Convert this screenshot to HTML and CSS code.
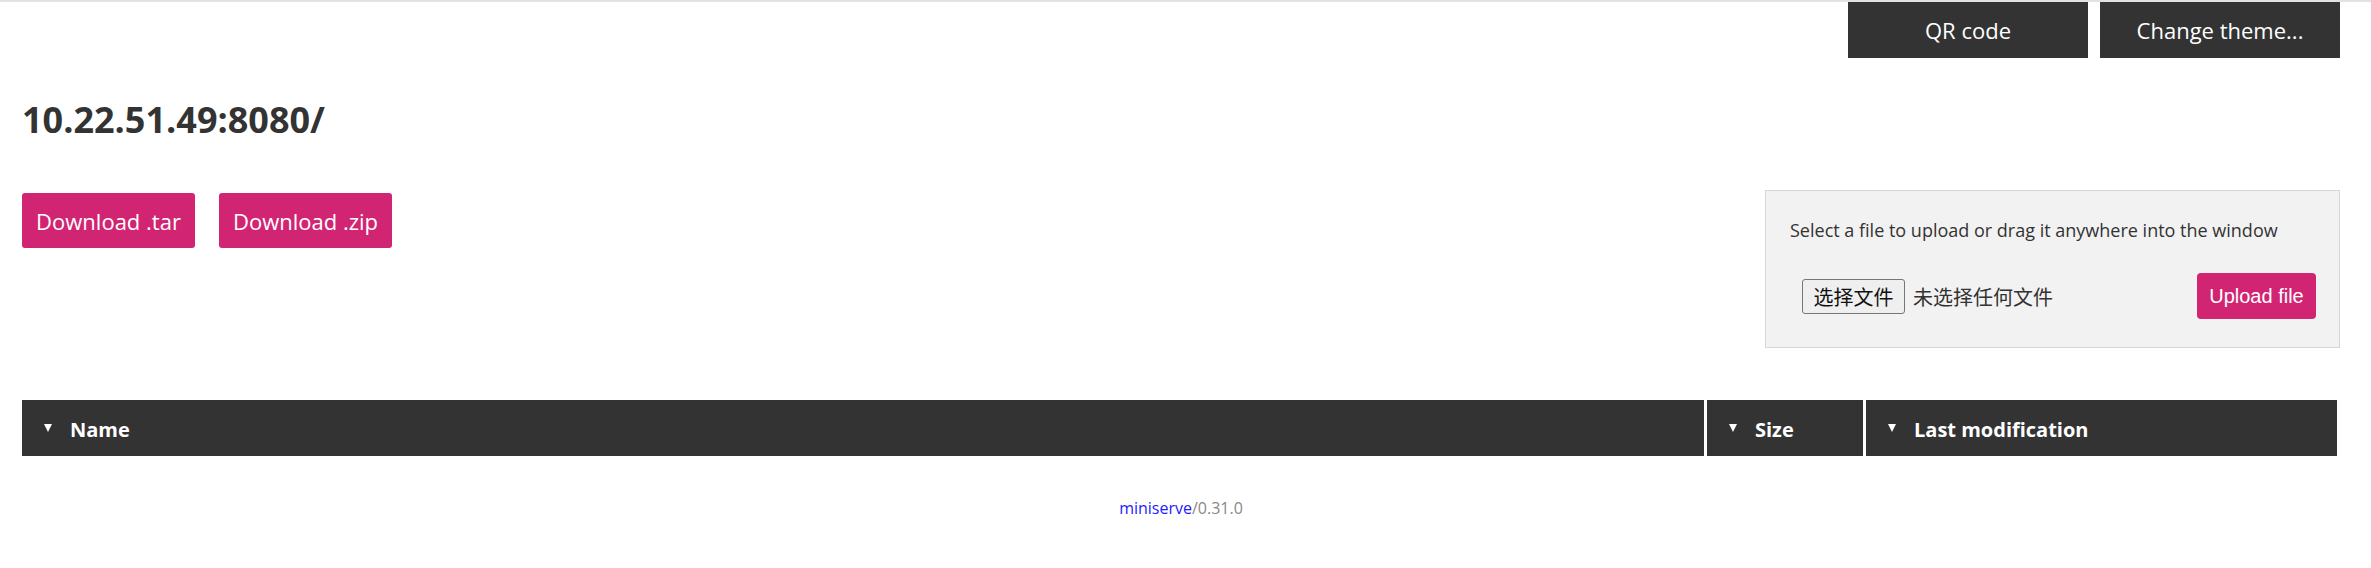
FILE: index.html
```html
<!DOCTYPE html>
<html lang="en">
<head>
<meta charset="utf-8">
<title>Index of /</title>
<link rel="stylesheet" href="styles.css">
</head>
<body>
<div class="page">
  <div class="toolbar">
    <button class="tool-btn">QR code</button>
    <button class="tool-btn">Change theme...</button>
  </div>
  <h1 class="title">10.22.51.49:8080/</h1>
  <div class="actions">
    <div class="downloads">
      <a class="dl-btn" href="#">Download .tar</a>
      <a class="dl-btn" href="#">Download .zip</a>
    </div>
    <div class="upload">
      <p class="upload-hint">Select a file to upload or drag it anywhere into the window</p>
      <div class="upload-row">
        <div class="file-input">
          <span class="file-btn">选择文件</span>
          <span class="file-none">未选择任何文件</span>
        </div>
        <button class="upload-btn">Upload file</button>
      </div>
    </div>
  </div>
  <div class="table-head">
    <div class="th"><span class="arrow"></span><span class="th-label">Name</span></div>
    <div class="th"><span class="arrow"></span><span class="th-label">Size</span></div>
    <div class="th"><span class="arrow"></span><span class="th-label">Last modification</span></div>
  </div>
  <footer class="footer"><a class="footer-link" href="#">miniserve</a><span class="footer-ver">/0.31.0</span></footer>
</div>
</body>
</html>
```
FILE: styles.css
```css
html, body {
  margin: 0;
  padding: 0;
  background: #ffffff;
}

body {
  border-top: 2px solid #e2e2e2;
  font-family: "Open Sans", "Noto Sans", sans-serif;
  color: #333333;
}

.page {
  padding: 0 31px 0 22px;
}

.toolbar {
  display: flex;
  justify-content: flex-end;
  gap: 12px;
}

.tool-btn {
  width: 240px;
  height: 56px;
  border: none;
  background: #333333;
  color: #ffffff;
  font-family: "Open Sans", sans-serif;
  font-size: 22px;
  padding: 0;
}

.title {
  margin: 37px 0 0 0;
  font-size: 36px;
  font-weight: 700;
  line-height: 49px;
  color: #333333;
}

.actions {
  display: flex;
  justify-content: space-between;
  align-items: flex-start;
  margin-top: 46px;
}

.downloads {
  display: flex;
  gap: 24px;
  margin-top: 3px;
}

.dl-btn {
  display: flex;
  align-items: center;
  justify-content: center;
  width: 173px;
  height: 55px;
  box-sizing: border-box;
  background: #d12573;
  color: #ffffff;
  border-radius: 3px;
  text-decoration: none;
  font-size: 22px;
}

.upload {
  width: 575px;
  height: 158px;
  box-sizing: border-box;
  border: 1px solid #d6d6d6;
  background: #f2f2f2;
  padding: 27px 23px 0 24px;
}

.upload-hint {
  margin: 0;
  font-size: 18px;
  line-height: 24px;
  color: #333333;
}

.upload-row {
  display: flex;
  justify-content: space-between;
  align-items: center;
  margin-top: 31px;
}

.file-input {
  display: flex;
  align-items: center;
  gap: 8px;
  margin-left: 12px;
  font-family: "Noto Sans CJK SC", sans-serif;
  font-size: 20px;
}

.file-btn {
  display: flex;
  align-items: center;
  justify-content: center;
  width: 103px;
  height: 35px;
  box-sizing: border-box;
  border: 1px solid #767676;
  border-radius: 3px;
  background: #efefef;
  color: #111111;
}

.file-none {
  color: #333333;
}

.upload-btn {
  width: 119px;
  height: 46px;
  border: none;
  border-radius: 4px;
  background: #d12573;
  color: #ffffff;
  font-family: "Liberation Sans", Arial, sans-serif;
  font-size: 20px;
  padding: 0;
}

.table-head {
  display: grid;
  grid-template-columns: 1fr 156px 471px;
  gap: 3px;
  margin: 52px 3px 0 0;
}

.th {
  display: flex;
  align-items: center;
  height: 56px;
  background: #333333;
  color: #ffffff;
  padding-left: 22px;
  padding-top: 2px;
  box-sizing: border-box;
}

.arrow {
  width: 0;
  height: 0;
  border-left: 4.5px solid transparent;
  border-right: 4.5px solid transparent;
  border-top: 8px solid #ffffff;
  margin-top: -3px;
}

.th-label {
  margin-left: 18px;
  font-size: 20px;
  font-weight: 700;
}

.footer {
  margin-top: 40px;
  text-align: center;
  font-size: 16px;
  line-height: 24px;
}

.footer-link {
  color: #2222ff;
  text-decoration: none;
}

.footer-ver {
  color: #888888;
}
```
